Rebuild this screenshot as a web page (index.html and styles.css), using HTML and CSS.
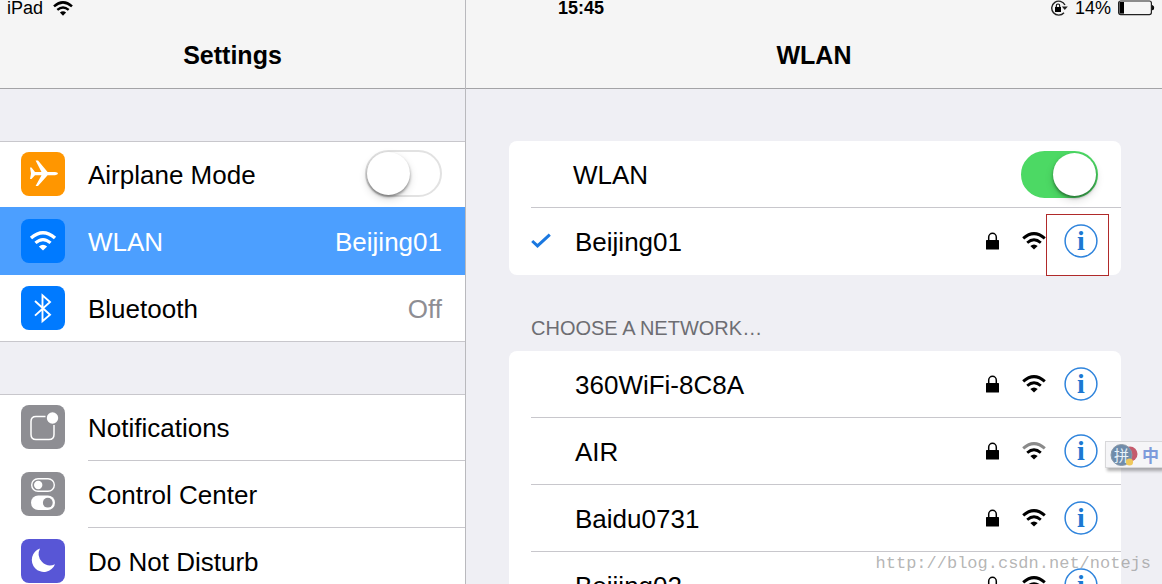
FILE: index.html
```html
<!DOCTYPE html>
<html lang="en">
<head>
<meta charset="utf-8">
<title>Settings - WLAN</title>
<link rel="stylesheet" href="styles.css">
</head>
<body>
<svg class="defs" aria-hidden="true">
  <symbol id="wifi" viewBox="0 0 24 18">
    <path d="M1.200 6.400 Q12 -3.200 22.800 6.400" fill="none" stroke="currentColor" stroke-width="3"/>
    <path d="M5.200 10.700 Q12 4.700 18.800 10.700" fill="none" stroke="currentColor" stroke-width="2.800"/>
    <path d="M8.300 13.900 Q12 10.900 15.700 13.900 L12 17.600 Z" fill="currentColor"/>
  </symbol>
  <symbol id="wifi-weak" viewBox="0 0 24 18">
    <path d="M1.200 6.400 Q12 -3.200 22.800 6.400" fill="none" stroke="#8a8a8a" stroke-width="3"/>
    <path d="M5.200 10.700 Q12 4.700 18.800 10.700" fill="none" stroke="currentColor" stroke-width="2.800"/>
    <path d="M8.300 13.900 Q12 10.900 15.700 13.900 L12 17.600 Z" fill="currentColor"/>
  </symbol>
  <symbol id="lock" viewBox="0 0 13 18">
    <rect x="0" y="8" width="13" height="9.500" rx=".6" fill="currentColor"/>
    <path d="M2.700 8.500 V5.300 a3.800 4 0 0 1 7.600 0 V8.500" fill="none" stroke="currentColor" stroke-width="1.500"/>
  </symbol>
  <symbol id="ring" viewBox="0 0 34 34">
    <circle cx="17" cy="17" r="15.900" fill="none" stroke="#2f84dc" stroke-width="1.500"/>
  </symbol>
</svg>

<div class="app">
  <div class="status">
    <div class="status-left"><span>iPad</span><svg class="status-wifi"><use href="#wifi"/></svg></div>
    <strong>15:45</strong>
    <div class="status-right">
      <svg class="status-rotation" viewBox="0 0 18 16">
        <path d="M14 12.800 A7 7 0 1 1 15 5" fill="none" stroke="#222" stroke-width="1.400"/>
        <path d="M11.800 6.500 H17.800 L14.800 10 Z" fill="#222"/>
        <rect x="5" y="7" width="6" height="5" fill="#000"/>
        <path d="M6.300 8 V5.700 a1.700 1.700 0 0 1 3.400 0 V8" fill="none" stroke="#000" stroke-width="1.100"/>
      </svg>
      <span>14%</span>
      <svg class="status-battery" viewBox="0 0 37 16">
        <rect x=".6" y="1" width="32.800" height="13.600" rx="2" fill="none" stroke="#222" stroke-width="1.200"/>
        <rect x="1.500" y="2" width="4.500" height="11.600" fill="#000"/>
        <path d="M34.600 5.500 a3 3 0 0 1 0 4.600 Z" fill="#000" stroke="#000"/>
      </svg>
    </div>
  </div>

  <aside class="sidebar">
    <header class="bar"><h1>Settings</h1></header>
    <ul class="group">
      <li class="item">
        <svg class="tile" viewBox="0 0 44 44"><rect width="44" height="44" rx="8" fill="#ff9600"/>
          <path d="M9 15.500 H10.500 L14 20 H20.500 L14.600 8.500 H17 L26.600 20 H34 Q37 20.200 37 21.600 Q37 23 34 23.200 H26.600 L17 34 H14.600 L20.500 23.200 H14 L10.500 27 H9 L10 21.500 Z" fill="#fff"/></svg>
        <label class="name" for="airplane">Airplane Mode</label>
        <input class="switch" type="checkbox" id="airplane">
      </li>
      <li class="item selected">
        <svg class="tile" viewBox="0 0 44 44"><rect width="44" height="44" rx="8" fill="#007aff"/>
          <use href="#wifi" x="8.500" y="12" width="27" height="20"/></svg>
        <a class="name" href="#wlan">WLAN</a>
        <span class="value">Beijing01</span>
      </li>
      <li class="item">
        <svg class="tile" viewBox="0 0 44 44"><rect width="44" height="44" rx="8" fill="#007aff"/>
          <path d="M14 15 L29 28.800 L21.500 35.200 V9.400 L29 16 L14 29.600" fill="none" stroke="#fff" stroke-width="1.900"/></svg>
        <a class="name" href="#bluetooth">Bluetooth</a>
        <span class="value">Off</span>
      </li>
    </ul>
    <ul class="group ruled">
      <li class="item">
        <svg class="tile" viewBox="0 0 44 44"><rect width="44" height="44" rx="8" fill="#8e8e93"/>
          <path d="M24.500 11.500 H15 Q10 11.500 10 16.500 V29.500 Q10 34.500 15 34.500 H28 Q33 34.500 33 29.500 V20" fill="none" stroke="#fff" stroke-width="1.500"/>
          <circle cx="31.500" cy="13" r="5.700" fill="#fff"/></svg>
        <a class="name" href="#notifications">Notifications</a>
      </li>
      <li class="item">
        <svg class="tile" viewBox="0 0 44 44"><rect width="44" height="44" rx="8" fill="#8e8e93"/>
          <rect x="10.700" y="6.700" width="22.600" height="12.600" rx="6.300" fill="none" stroke="#fff" stroke-width="1.400"/>
          <circle cx="17.200" cy="13" r="4.200" fill="#fff"/>
          <rect x="10" y="23.500" width="24" height="14.500" rx="7.200" fill="#fff"/>
          <circle cx="26.800" cy="30.700" r="4.900" fill="#8e8e93"/></svg>
        <a class="name" href="#control">Control Center</a>
      </li>
      <li class="item">
        <svg class="tile" viewBox="0 0 44 44"><rect width="44" height="44" rx="8" fill="#5856d6"/>
          <path d="M19 9.500 A12 12 0 1 0 34 25.200 A11.500 11.500 0 0 1 19 9.500 Z" fill="#fff"/></svg>
        <a class="name" href="#dnd">Do Not Disturb</a>
      </li>
    </ul>
  </aside>

  <main class="detail" id="wlan">
    <header class="bar"><h1>WLAN</h1></header>
    <div class="content">
      <ul class="card">
        <li class="row">
          <label class="name" for="wlan-on">WLAN</label>
          <input class="switch" type="checkbox" id="wlan-on" checked>
        </li>
        <li class="row network joined">
          <svg class="check" viewBox="0 0 20 16"><path d="M1.200 8 L6.500 12.900 L18.800 1.600" fill="none" stroke="#1a78e0" stroke-width="3"/></svg>
          <span class="name">Beijing01</span>
          <svg class="lock"><use href="#lock"/></svg><svg class="signal"><use href="#wifi"/></svg>
          <button class="info marked" aria-label="About Beijing01"><svg><use href="#ring"/></svg><span>i</span></button>
        </li>
      </ul>
      <h2>CHOOSE A NETWORK…</h2>
      <ul class="card">
        <li class="row network"><span class="name">360WiFi-8C8A</span>
          <svg class="lock"><use href="#lock"/></svg><svg class="signal"><use href="#wifi"/></svg>
          <button class="info" aria-label="About 360WiFi-8C8A"><svg><use href="#ring"/></svg><span>i</span></button></li>
        <li class="row network"><span class="name">AIR</span>
          <svg class="lock"><use href="#lock"/></svg><svg class="signal"><use href="#wifi-weak"/></svg>
          <button class="info" aria-label="About AIR"><svg><use href="#ring"/></svg><span>i</span></button></li>
        <li class="row network"><span class="name">Baidu0731</span>
          <svg class="lock"><use href="#lock"/></svg><svg class="signal"><use href="#wifi"/></svg>
          <button class="info" aria-label="About Baidu0731"><svg><use href="#ring"/></svg><span>i</span></button></li>
        <li class="row network"><span class="name">Beijing02</span>
          <svg class="lock"><use href="#lock"/></svg><svg class="signal"><use href="#wifi"/></svg>
          <button class="info" aria-label="About Beijing02"><svg><use href="#ring"/></svg><span>i</span></button></li>
      </ul>
    </div>
  </main>

  <div class="ime">
    <div class="ime-logo"><svg viewBox="0 0 28 26">
      <circle cx="20" cy="12" r="7.500" fill="#c55b6c"/>
      <circle cx="11.500" cy="13" r="10.500" fill="#6f8cab" stroke="#8a98a5"/>
      <circle cx="19.500" cy="20" r="3.600" fill="#efc85c"/>
    </svg><span>拼</span></div>
    <span class="ime-mode">中</span>
  </div>
  <div class="watermark">http://blog.csdn.net/notejs</div>
</div>
</body>
</html>
```
FILE: styles.css
```css
* { box-sizing: border-box; }

body {
  margin: 0;
  background: #efeff4;
  color: #000;
  font-family: "Liberation Sans", Arial, sans-serif;
  font-size: 26px;
}

ul { list-style: none; margin: 0; padding: 0; }
a { color: inherit; text-decoration: none; }
svg { display: block; flex: none; }
.defs { position: absolute; width: 0; height: 0; }

.app {
  position: relative;
  display: grid;
  grid-template-columns: 466px 1fr;
  height: 100vh;
  overflow: hidden;
}

/* Status bar lies over both title bars */
.status {
  position: absolute;
  inset: 0 0 auto;
  display: grid;
  grid-template-columns: 1fr auto 1fr;
  align-items: center;
  height: 12px;
  padding: 0 7px;
  font-size: 18px;
  line-height: 12px;
}
.status-left, .status-right { display: flex; align-items: center; gap: 8px; }
.status-left { gap: 10px; }
.status-right { justify-content: flex-end; gap: 7px; }
.status-wifi { width: 20px; height: 15px; }
.status-rotation { width: 18px; height: 16px; }
.status-battery { width: 37px; height: 16px; }

.bar {
  display: flex;
  align-items: center;
  justify-content: center;
  height: 89px;
  padding-top: 22px;
  background: #f5f5f5;
  border-bottom: 1px solid #a3a3a6;
}
h1 { margin: 0; font-size: 25px; line-height: 30px; }

.sidebar { border-right: 1px solid #b9b9bd; }
.group {
  margin-top: 52px;
  background: #fff;
  box-shadow: inset 0 1px #c8c7cc, inset 0 -1px #c8c7cc;
}
.item {
  position: relative;
  display: flex;
  align-items: center;
  height: 67px;
  padding: 0 23px 2px 21px;
}
.tile { width: 44px; height: 44px; margin-right: 23px; color: #fff; }
.name { flex: 1; }
.name, .value { padding-top: 3px; }
.value { color: #8e8e93; }
.selected { background: #4c9fff; box-shadow: 0 -1px #4c9fff; color: #fff; }
.selected .value { color: #fff; }
.ruled .item::after {
  content: "";
  position: absolute;
  inset: auto 0 0 88px;
  border-bottom: 1px solid #c8c7cc;
}

.content { padding: 52px 41px 0 43px; }
.card { padding-left: 22px; background: #fff; border-radius: 8px; }
.row {
  display: flex;
  align-items: center;
  height: 67px;
  padding: 0 23px 0 42px;
  border-bottom: 1px solid #c8c7cc;
}
.row:last-child { border-bottom-color: transparent; }
.network { padding-left: 44px; }
.joined { padding-left: 0; }
.check { width: 20px; height: 16px; margin-right: 24px; }
.lock { width: 13px; height: 18px; margin-right: 23px; }
.signal { width: 24px; height: 18px; margin-right: 18px; }
.network .signal { margin-right: 18px; }
.info {
  position: relative;
  display: grid;
  place-items: center;
  width: 34px;
  height: 34px;
  padding: 0;
  border: 0;
  background: none;
  color: #1c78d2;
  font: bold 28px/34px "Liberation Serif", serif;
}
.info > * { grid-area: 1 / 1; }
.info svg { width: 34px; height: 34px; }
.marked::after {
  content: "";
  position: absolute;
  inset: -10px -11px -18px -18px;
  border: 1px solid #b02a2a;
}
h2 {
  margin: 42px 22px 11px;
  color: #6d6d72;
  font-size: 20px;
  font-weight: normal;
  line-height: 23px;
}

.switch {
  appearance: none;
  flex: none;
  width: 77px;
  height: 47px;
  margin: 0;
  border: 2px solid #e2e2e2;
  border-radius: 24px;
  background: #fff;
}
.switch::before {
  content: "";
  display: block;
  width: 43px;
  height: 43px;
  border-radius: 50%;
  background: #fff;
  box-shadow: 0 2px 3px rgba(0, 0, 0, .4), 0 4px 8px rgba(0, 0, 0, .15);
}
.switch:checked { border-color: #4cd964; background: #4cd964; }
.switch:checked::before { margin-left: auto; }

/* Input method palette docked to the window's right edge */
.ime {
  position: absolute;
  top: 441px;
  right: 0;
  display: flex;
  align-items: center;
  gap: 4px;
  height: 27px;
  padding: 0 3px 0 4px;
  background: #f5f5f7;
  border: 1px solid #d8d8da;
  border-right: 0;
  box-shadow: 2px 3px 3px rgba(0, 0, 0, .3);
  color: #7d9bdb;
  font-family: "Noto Sans CJK SC", sans-serif;
  font-size: 17px;
  line-height: 24px;
}
.ime-mode { font-weight: bold; }
.ime-logo { display: grid; place-items: center start; }
.ime-logo > * { grid-area: 1 / 1; }
.ime-logo svg { width: 28px; height: 26px; }
.ime-logo span { padding-left: 4px; color: #e8f2fa; font-size: 15px; }

.watermark {
  position: absolute;
  right: 11px;
  bottom: 9px;
  color: rgba(140, 140, 140, .65);
  font-family: "Liberation Mono", monospace;
  font-size: 17px;
  line-height: 22px;
}
```
